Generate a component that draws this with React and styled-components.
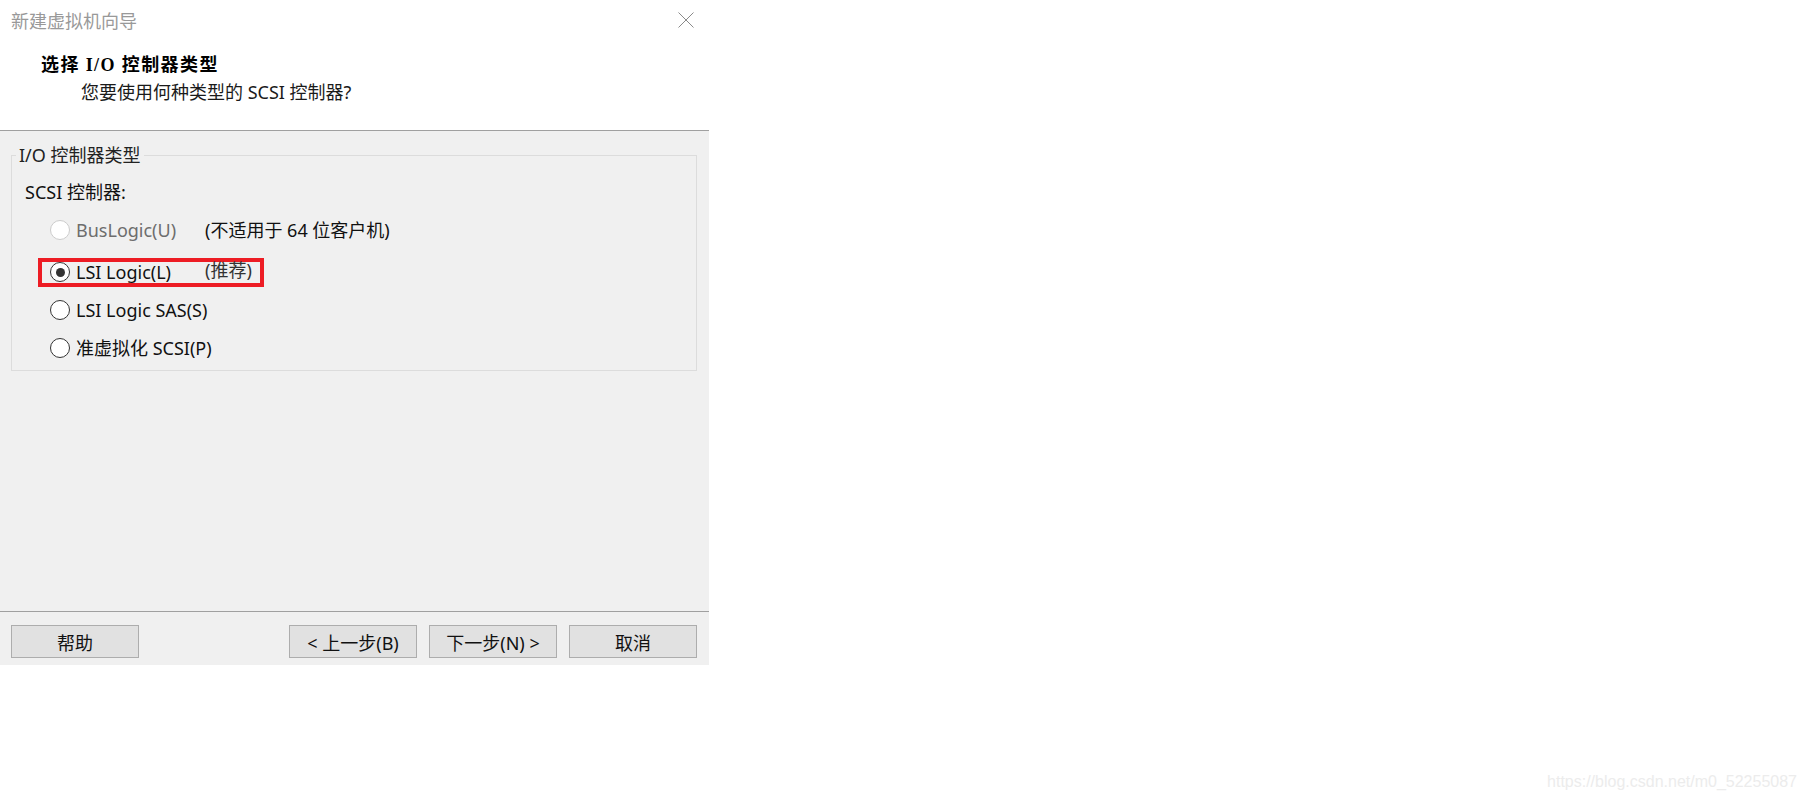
import React from 'react';
import styled, { createGlobalStyle } from 'styled-components';

const GlobalStyle = createGlobalStyle`
  html, body {
    margin: 0;
    padding: 0;
    background: #ffffff;
  }
  body {
    font-family: "Noto Sans", "Noto Sans CJK SC", sans-serif;
  }
`;

const Page = styled.div`
  position: relative;
  width: 1807px;
  height: 799px;
  background: #ffffff;
`;

const Dialog = styled.div`
  width: 709px;
  height: 665px;
  display: flex;
  flex-direction: column;
  background: #f0f0f0;
  font-size: 18px;
  color: #111;
`;

const Header = styled.div`
  height: 130px;
  background: #ffffff;
  border-bottom: 1px solid #a0a0a0;
  display: flex;
  flex-direction: column;
`;

const TitleBar = styled.div`
  height: 40px;
  display: flex;
  align-items: center;
  justify-content: space-between;
  padding: 0 15px 0 11px;
`;

const Title = styled.span`
  color: #999999;
  font-family: "Noto Sans CJK SC", sans-serif;
  font-size: 18px;
  line-height: 22px;
`;

const CloseBtn = styled.span`
  display: flex;
  width: 16px;
  height: 16px;
`;

const Heading = styled.div`
  margin: 14px 0 0 41px;
  font-family: "Liberation Serif", "Noto Sans CJK SC", serif;
  font-weight: bold;
  font-size: 18px;
  line-height: 22px;
  letter-spacing: 1.4px;
  color: #000;
`;

const SubHeading = styled.div`
  margin: 5px 0 0 81px;
  font-size: 18px;
  line-height: 22px;
  color: #1a1a1a;
`;

const Body = styled.div`
  flex: 1;
  padding: 13px 12px 0 11px;
`;

const GroupBox = styled.fieldset`
  margin: 0;
  padding: 15px 0 3px 0;
  min-width: 0;
  border: 1px solid #dcdcdc;
  display: flex;
  flex-direction: column;
`;

const Legend = styled.legend`
  margin-left: 4px;
  padding: 0 3px;
  font-size: 18px;
  line-height: 22px;
  color: #222;
`;

const GroupLabel = styled.div`
  padding-left: 13px;
  line-height: 22px;
  margin-bottom: 8px;
  color: #111;
`;

const Option = styled.div`
  height: 38px;
  display: flex;
  align-items: center;
  padding-left: 26px;
  margin-bottom: ${p => (p.$gap ? '4px' : '0')};
`;

const Frame = styled.div`
  display: flex;
  align-items: center;
  height: 21px;
  padding: 0 8px 0 8px;
  border: 4px solid ${p => (p.$highlight ? '#ed1c24' : 'transparent')};
`;

const Radio = styled.span`
  box-sizing: border-box;
  width: 20px;
  height: 20px;
  border-radius: 50%;
  background: #ffffff;
  border: 1.5px solid ${p => (p.$disabled ? '#cccccc' : '#333333')};
  display: flex;
  align-items: center;
  justify-content: center;
  &::after {
    content: '';
    width: 9px;
    height: 9px;
    border-radius: 50%;
    background: ${p => (p.$checked ? '#333333' : 'transparent')};
  }
`;

const OptionLabel = styled.span`
  margin-left: 6px;
  min-width: 129px;
  line-height: 22px;
  color: ${p => (p.$disabled ? '#6d6d6d' : '#111')};
`;

const Note = styled.span`
  line-height: 22px;
  color: ${p => (p.$muted ? '#333' : '#111')};
  position: relative;
  top: ${p => (p.$raised ? '-2px' : '0')};
`;

const Footer = styled.div`
  height: 54px;
  border-top: 1px solid #a0a0a0;
  box-sizing: border-box;
  display: flex;
  align-items: flex-start;
  gap: 12px;
  padding: 13px 12px 0 11px;
`;

const Spacer = styled.div`
  flex: 1;
`;

const Button = styled.button`
  width: 128px;
  height: 33px;
  box-sizing: border-box;
  background: #e1e1e1;
  border: 1px solid #adadad;
  font-family: "Noto Sans", "Noto Sans CJK SC", sans-serif;
  font-size: 18px;
  color: #111;
  padding: 0;
  display: flex;
  align-items: center;
  justify-content: center;
`;

const Watermark = styled.div`
  position: absolute;
  right: 10px;
  bottom: 8px;
  font-family: "Liberation Sans", Arial, sans-serif;
  font-size: 16px;
  color: #ececec;
`;

const CloseIcon = () => (
  <svg width="16" height="16" viewBox="0 0 16 16">
    <path d="M0.5 0.5 L15.5 15.5 M15.5 0.5 L0.5 15.5" stroke="#8a8a8a" strokeWidth="1" fill="none" />
  </svg>
);

const options = [
  { label: 'BusLogic(U)', note: '(不适用于 64 位客户机)', disabled: true, gap: true },
  { label: 'LSI Logic(L)', note: '(推荐)', checked: true, highlight: true, muted: true },
  { label: 'LSI Logic SAS(S)' },
  { label: '准虚拟化 SCSI(P)' },
];

export default function App() {
  return (
    <Page>
      <GlobalStyle />
      <Dialog>
        <Header>
          <TitleBar>
            <Title>新建虚拟机向导</Title>
            <CloseBtn><CloseIcon /></CloseBtn>
          </TitleBar>
          <Heading>选择 I/O 控制器类型</Heading>
          <SubHeading>您要使用何种类型的 SCSI 控制器?</SubHeading>
        </Header>
        <Body>
          <GroupBox>
            <Legend>I/O 控制器类型</Legend>
            <GroupLabel>SCSI 控制器:</GroupLabel>
            {options.map(o => (
              <Option key={o.label} $gap={o.gap}>
                <Frame $highlight={o.highlight}>
                  <Radio $checked={o.checked} $disabled={o.disabled} />
                  <OptionLabel $disabled={o.disabled}>{o.label}</OptionLabel>
                  {o.note && <Note $muted={o.muted} $raised={o.muted}>{o.note}</Note>}
                </Frame>
              </Option>
            ))}
          </GroupBox>
        </Body>
        <Footer>
          <Button>帮助</Button>
          <Spacer />
          <Button>&lt; 上一步(B)</Button>
          <Button>下一步(N) &gt;</Button>
          <Button>取消</Button>
        </Footer>
      </Dialog>
      <Watermark>https://blog.csdn.net/m0_52255087</Watermark>
    </Page>
  );
}
